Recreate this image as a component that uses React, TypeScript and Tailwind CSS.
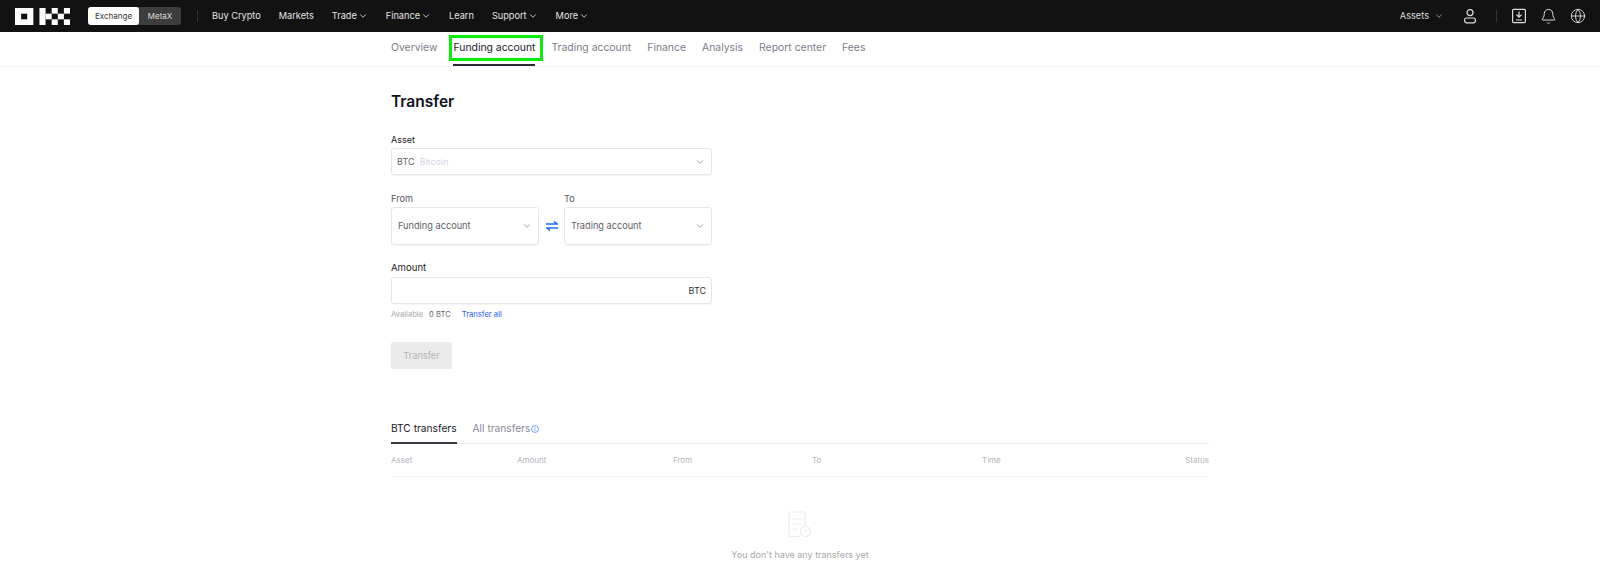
import { ChevronDown, Bell, Globe } from 'lucide-react'

const fontStack = "font-['Inter','Noto_Sans',sans-serif]"

function NavItem({ label, menu }: { label: string; menu?: boolean }) {
  return (
    <span className="flex items-center gap-[1px] text-[9.2px] text-[#e4e4e4]">
      {label}
      {menu && <ChevronDown className="w-[10px] h-[10px]" strokeWidth={2} />}
    </span>
  )
}

function Logo() {
  // OKX block mark
  const blocks = [
    [0, 0, 18, 18],
    [24, 0, 6, 18],
    [30, 6, 6, 6],
    [36, 0, 6, 6],
    [36, 12, 6, 6],
    [42, 6, 6, 6],
    [48, 0, 6, 6],
    [48, 12, 6, 6],
  ]
  return (
    <svg width="55" height="17" viewBox="0 0 54 18" preserveAspectRatio="none" fill="#fff" className="shrink-0">
      {blocks.map(([x, y, w, h], i) => (
        <rect key={i} x={x} y={y} width={w} height={h} />
      ))}
      <rect x="6" y="6" width="6" height="6" fill="#121212" />
    </svg>
  )
}

function SelectBox({ text, className }: { text: string; className: string }) {
  return (
    <div className={`flex items-center justify-between border border-[#e6e6e6] rounded-[3px] pl-[6px] pr-[6px] shadow-[0_1px_1px_rgba(0,0,0,0.04)] ${className}`}>
      <span className="text-[9.2px] text-[#5f5f69]">{text}</span>
      <ChevronDown className="w-[10px] h-[10px] text-[#777]" strokeWidth={1.6} />
    </div>
  )
}

const columns = [
  { label: 'Asset', className: 'w-[126px]' },
  { label: 'Amount', className: 'w-[156px]' },
  { label: 'From', className: 'w-[139px]' },
  { label: 'To', className: 'w-[170px]' },
  { label: 'Time', className: 'flex-1' },
  { label: 'Status', className: '' },
]

export default function App() {
  return (
    <div className={`bg-white min-h-screen ${fontStack}`}>
      <header className="h-8 bg-[#121212] flex items-center pl-[15px]">
        <Logo />
        <div className="ml-[18px] flex h-[18px] w-[93px] rounded-[3px] bg-[#3d3d3d] text-[8px]">
          <span className="w-[51px] bg-white text-[#333] rounded-[3px] flex items-center justify-center">Exchange</span>
          <span className="flex-1 text-[#ddd] flex items-center justify-center">MetaX</span>
        </div>
        <div className="ml-4 w-px h-3 bg-[#333]" />
        <nav className="ml-[14px] flex items-center gap-[18px]">
          <NavItem label="Buy Crypto" />
          <NavItem label="Markets" />
          <NavItem label="Trade" menu />
          <NavItem label="Finance" menu />
          <NavItem label="Learn" />
          <NavItem label="Support" menu />
          <NavItem label="More" menu />
        </nav>
        <div className="ml-auto flex items-center text-[#dcdcdc] pr-[14px]">
          <span className="text-[9.2px]">Assets</span>
          <ChevronDown className="w-[10px] h-[10px] ml-[5px]" strokeWidth={1.5} />
          <svg viewBox="0 0 16 16" className="w-4 h-4 ml-[18px]" fill="none" stroke="currentColor" strokeWidth="1.2">
            <circle cx="8" cy="4.6" r="3" />
            <rect x="2.6" y="10" width="10.8" height="4.8" rx="2" />
          </svg>
          <div className="ml-[18px] w-px h-3 bg-[#333]" />
          <svg viewBox="0 0 16 16" className="w-4 h-4 ml-[14px]" fill="none" stroke="currentColor" strokeWidth="1.2">
            <rect x="1.6" y="1.4" width="12.8" height="13.2" rx="1" />
            <path d="M8 3.6v5.4M5.4 6.6 8 9.2l2.6-2.6M5 12h6" />
          </svg>
          <Bell className="w-[17px] h-[17px] ml-[13px]" strokeWidth={1.4} />
          <Globe className="w-[16px] h-[16px] ml-[13px]" strokeWidth={1.4} />
        </div>
      </header>

      <div className="h-[35px] pb-[2px] border-b border-[#f4f4f4]">
        <div className="w-[818px] mx-auto h-full flex items-center gap-4 text-[10.4px] text-[#7d7d8a]">
          <span>Overview</span>
          <span className="relative text-[#20202a]">
            Funding account
            <span className="absolute left-[-4px] right-[-8px] top-[-5px] bottom-[-5px] border-[3px] border-[#0dea0d]" />
            <span className="absolute left-0 right-0 bottom-[-10px] h-[2px] bg-[#2a2a35]" />
          </span>
          <span>Trading account</span>
          <span>Finance</span>
          <span>Analysis</span>
          <span>Report center</span>
          <span>Fees</span>
        </div>
      </div>

      <main className="w-[818px] mx-auto">
        <h1 className="mt-[23px] text-[15.5px] leading-[24px] font-semibold text-[#0e1220]">Transfer</h1>

        <div className="w-[321px]">
          <label className="block mt-[19px] text-[9px] leading-[14px] text-[#222]">Asset</label>
          <div className="mt-[1px] h-[27px] flex items-center justify-between border border-[#e6e6e6] rounded-[3px] pl-[5px] pr-[6px] shadow-[0_1px_1px_rgba(0,0,0,0.04)]">
            <span className="text-[9px]">
              <span className="text-[#5f5f69]">BTC</span>
              <span className="ml-[5px] text-[#d8d8e4]">Bitcoin</span>
            </span>
            <ChevronDown className="w-[10px] h-[10px] text-[#777]" strokeWidth={1.6} />
          </div>

          <div className="mt-[17px] flex items-end">
            <div className="w-[148px]">
              <label className="block text-[9.2px] leading-[14px] text-[#55555f]">From</label>
              <SelectBox text="Funding account" className="mt-[1px] h-[38px]" />
            </div>
            <div className="w-[25px] h-[38px] flex items-center justify-center">
              <svg viewBox="0 0 12 10" className="w-3 h-[10px]" fill="none" stroke="#1f6bff" strokeWidth="1.5">
                <path d="M0 3h11L8 .5M12 7H1l3 2.500" />
              </svg>
            </div>
            <div className="flex-1">
              <label className="block text-[9.2px] leading-[14px] text-[#55555f]">To</label>
              <SelectBox text="Trading account" className="mt-[1px] h-[38px]" />
            </div>
          </div>

          <label className="block mt-[16px] text-[9.6px] leading-[14px] text-[#222]">Amount</label>
          <div className="mt-[2px] h-[27px] flex items-center justify-end border border-[#e6e6e6] rounded-[3px] pr-[5px] text-[9px] text-[#333] shadow-[0_1px_1px_rgba(0,0,0,0.04)]">
            BTC
          </div>
          <div className="mt-[5px] flex text-[7.6px] leading-[12px]">
            <span className="text-[#a8a8a8]">Available</span>
            <span className="ml-[6px] text-[#666]">0 BTC</span>
            <span className="ml-[11px] text-[#2a5cf0]">Transfer all</span>
          </div>
          <button className="mt-[21px] block w-[61px] h-[27px] rounded-[2px] bg-[#ebebeb] text-[9.2px] text-[#b5b5b5]">
            Transfer
          </button>
        </div>

        <div className="mt-[52px] h-[23px] flex border-b border-[#e9e9e9] text-[10.2px]">
          <span className="h-[23px] border-b-2 border-[#3a3a45] text-[#20202a]">BTC transfers</span>
          <span className="ml-4 flex items-start text-[#8a8a98]">
            All transfers
            <svg viewBox="0 0 10 10" className="w-2 h-2 mt-[4px] ml-[1px]" fill="none" stroke="#3d7bff" strokeWidth="0.9">
              <circle cx="5" cy="5" r="4.3" />
              <path d="M5 4.3v3M5 2.4v1" />
            </svg>
          </span>
        </div>
        <div className="h-[33px] flex items-center border-b border-[#f2f2f2] text-[8px] text-[#b4b4bc]">
          {columns.map((col) => (
            <span key={col.label} className={col.className}>{col.label}</span>
          ))}
        </div>

        <div className="mt-[34px] flex flex-col items-center">
          <svg viewBox="0 0 24 27" className="w-[24px] h-[27px]" fill="none" stroke="#ececee" strokeWidth="1.2">
            <path d="M12 25.500H2.500A1.500 1.500 0 0 1 1 24V2.500A1.500 1.500 0 0 1 2.500 1h13A1.500 1.500 0 0 1 17 2.500V15" />
            <path d="M5 8h8M5 13h8M5 18h4" />
            <circle cx="17.500" cy="20.500" r="5" />
            <path d="M17.500 18.500v4" />
          </svg>
          <p className="mt-[10px] text-[9px] text-[#a8a8a8]">You don't have any transfers yet</p>
        </div>
      </main>
    </div>
  )
}
